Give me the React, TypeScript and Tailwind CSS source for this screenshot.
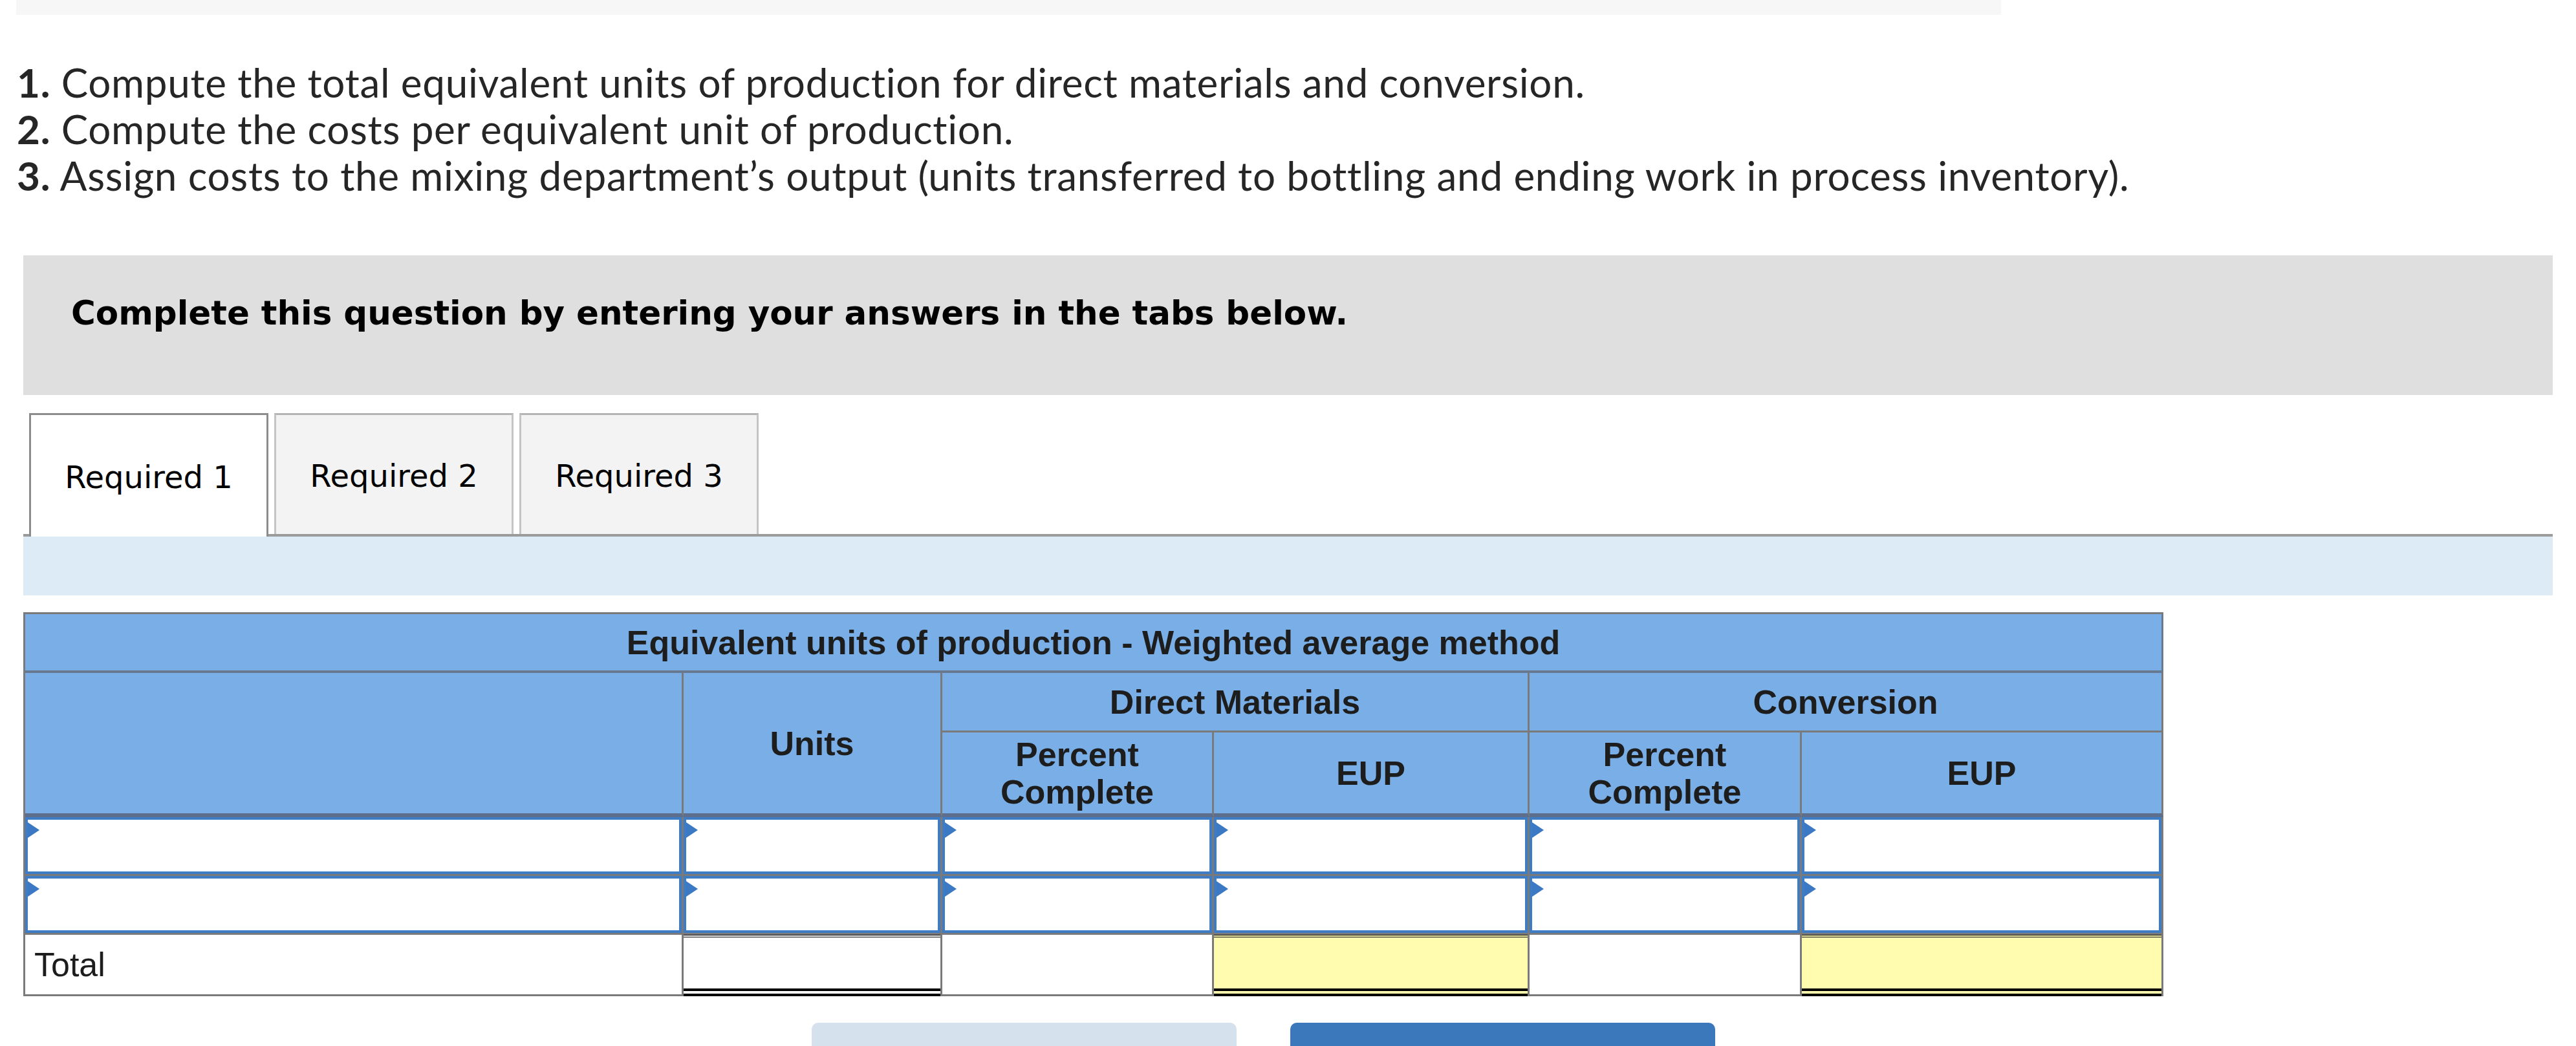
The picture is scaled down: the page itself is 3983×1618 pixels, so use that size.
import React from "react";

const tabs = ["Required 1", "Required 2", "Required 3"];

const head = "bg-[#79aee6] flex items-center justify-center text-center";
const gray = "border-[#7a7a7a]";

function Flag() {
  return (
    <span className="absolute left-0 top-[4px] w-0 h-0 border-y-[12px] border-y-transparent border-l-[18px] border-l-[#3b79c4]" />
  );
}

function InputCell() {
  return (
    <div className={`border-b-[3px] border-r-[3px] ${gray}`}>
      <div className="relative h-full border-[4px] border-[#3f7cc6] bg-white">
        <Flag />
      </div>
    </div>
  );
}

function TotalLine({ yellow }: { yellow?: boolean }) {
  return (
    <div className={`border-r-[3px] ${gray}`}>
      <div className={`h-full border-t-[4px] border-b-[12px] border-double border-black ${yellow ? "bg-[#fffcaf]" : "bg-white"}`} />
    </div>
  );
}

export default function App() {
  return (
    <div className="min-h-screen bg-white text-[#222]">
      {/* cut-off strip from the previous block */}
      <div className="ml-[25px] w-[3069px] h-[23px] bg-[#f7f7f7]" />

      <div className="pl-[26px] pt-[68px] [font-family:Lato,'Open_Sans',sans-serif] text-[62px] leading-[72px] tracking-[0.7px] text-[#262626]">
        <p><b>1.</b> Compute the total equivalent units of production for direct materials and conversion.</p>
        <p><b>2.</b> Compute the costs per equivalent unit of production.</p>
        <p><b>3.</b> Assign costs to the mixing department’s output (units transferred to bottling and ending work in process inventory).</p>
      </div>

      <div className="px-[36px] mt-[88px]">
        <div className="h-[216px] bg-[#dfdfdf] pl-[74px] pt-[59px] [font-family:'DejaVu_Sans',Verdana,sans-serif] font-bold text-[51.5px] leading-[60px] text-black">
          Complete this question by entering your answers in the tabs below.
        </div>

        <div className="mt-[32px] flex items-end gap-[9px] pl-[9px] border-b-[4px] border-[#9b9b9b] h-[187px] [font-family:'DejaVu_Sans',Verdana,sans-serif] text-[48px] text-black">
          {tabs.map((t, i) =>
            i === 0 ? (
              <div key={t} className="w-[370px] h-[191px] -mb-[4px] pt-[4px] bg-white border-[3px] border-b-0 border-[#8c8c8c] flex items-center justify-center">
                {t}
              </div>
            ) : (
              <div key={t} className="w-[370px] h-[187px] pt-[4px] bg-[#f3f3f3] border-[3px] border-b-0 border-[#c4c4c4] border-t-[#b4b4b4] flex items-center justify-center">
                {t}
              </div>
            )
          )}
        </div>

        <div className="h-[91px] bg-[#ddebf7]" />

        <div
          className={`mt-[26px] w-[3309px] grid grid-cols-[1018px_400px_420px_488px_421px_559px] grid-rows-[91px_92px_131px_91px_91px_95px] border-t-[3px] border-l-[3px] ${gray} [font-family:'Liberation_Sans',Arial,sans-serif] text-[52px] leading-[58px] text-[#1d1d1d]`}
        >
          <div className={`col-span-6 ${head} font-bold border-r-[3px] border-b-[4px] border-[#687a92]`}>
            Equivalent units of production - Weighted average method
          </div>

          <div className={`row-span-2 ${head} border-r-[3px] border-r-[#7a7a7a] border-b-[6px] border-b-[#5d6f8c]`} />
          <div className={`row-span-2 ${head} font-bold border-r-[3px] border-r-[#7a7a7a] border-b-[6px] border-b-[#5d6f8c]`}>
            Units
          </div>
          <div className={`col-span-2 ${head} font-bold border-r-[3px] border-b-[3px] ${gray}`}>Direct Materials</div>
          <div className={`col-span-2 ${head} font-bold border-r-[3px] border-b-[3px] ${gray}`}>Conversion</div>

          {["Percent Complete", "EUP", "Percent Complete", "EUP"].map((h, i) => (
            <div key={i} className={`${head} font-bold border-r-[3px] border-r-[#7a7a7a] border-b-[6px] border-b-[#5d6f8c]`}>
              {h === "EUP" ? h : (<span>Percent<br />Complete</span>)}
            </div>
          ))}

          {[0, 1].map((r) =>
            [0, 1, 2, 3, 4, 5].map((c) => <InputCell key={`${r}-${c}`} />)
          )}

          <div className={`bg-white border-r-[3px] border-b-[3px] ${gray} flex items-center pl-[14px] font-normal`}>Total</div>
          <TotalLine />
          <div className={`bg-white border-r-[3px] border-b-[3px] ${gray}`} />
          <TotalLine yellow />
          <div className={`bg-white border-r-[3px] border-b-[3px] ${gray}`} />
          <TotalLine yellow />
        </div>

        <div className="mt-[41px] pl-[1219px] flex gap-[83px]">
          <div className="w-[657px] h-[100px] rounded-[10px] bg-[#d5e2ee]" />
          <div className="w-[657px] h-[100px] rounded-[10px] bg-[#3a77bb]" />
        </div>
      </div>
    </div>
  );
}
